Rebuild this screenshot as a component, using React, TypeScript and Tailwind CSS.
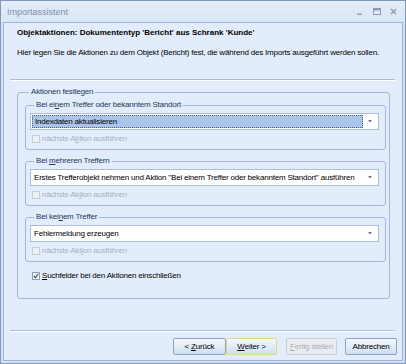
import React from "react";

const font = { fontFamily: '"Liberation Sans", Arial, sans-serif' };

function Combo({ text, selected }: { text: string; selected?: boolean }) {
  return (
    <div className="mr-[2px] flex h-[17px] items-center border border-[#abbfdc] bg-white pl-[1px] pr-[1px]">
      <div
        className={
          "flex h-[13px] flex-1 items-center whitespace-nowrap pl-[2px] " +
          (selected ? "border border-dotted border-[#4f6482] bg-[#abc4ea] text-black" : "text-black")
        }
      >
        {text}
      </div>
      <div className="flex w-[14px] items-center justify-center">
        <svg width="4" height="3" viewBox="0 0 4 3">
          <path d="M0 0h4L2 2.5z" fill="#6a7a90" />
        </svg>
      </div>
    </div>
  );
}

function Check({ children, checked, disabled }: { children: React.ReactNode; checked?: boolean; disabled?: boolean }) {
  return (
    <div className={"flex h-[10px] items-center gap-[2px] whitespace-nowrap " + (disabled ? "text-[#a8b2c0]" : "text-black")}>
      <div
        className={
          "flex h-[8px] w-[8px] items-center justify-center border " +
          (disabled ? "border-[#c3ccd8] bg-[#eef2f7]" : "border-[#8fa3c0] bg-[#f4f7fb]")
        }
      >
        {checked && (
          <svg width="6" height="6" viewBox="0 0 6 6">
            <path d="M0.8 3 L2.4 4.6 L5.2 1" stroke="#3b4e6a" strokeWidth="1.2" fill="none" />
          </svg>
        )}
      </div>
      <span>{children}</span>
    </div>
  );
}

function Group({ title, children, className }: { title: React.ReactNode; children: React.ReactNode; className?: string }) {
  return (
    <fieldset className={"rounded-[3px] border border-[#a3b8d9] " + (className || "")}>
      <legend className="ml-[4px] h-[10px] whitespace-nowrap px-[2px] leading-[10px] text-[#1e395b]">{title}</legend>
      {children}
    </fieldset>
  );
}

function Btn({ children, variant }: { children: React.ReactNode; variant?: "default" | "disabled" }) {
  const base = "flex h-[17px] items-center justify-center rounded-[2px] border whitespace-pre ";
  const cls =
    variant === "default"
      ? "border-[#e6d68c] bg-gradient-to-b from-[#f4f8fd] to-[#cfdff3] text-black"
      : variant === "disabled"
      ? "border-[#c9ced6] bg-[#e9edf2] text-[#a9b0ba]"
      : "border-[#8ba2c4] bg-gradient-to-b from-[#f4f8fd] to-[#cfdff3] text-black";
  return <div className={base + cls}>{children}</div>;
}

export default function App() {
  return (
    <div className="h-[364px] w-[406px] text-[8px] leading-[10px] tracking-[-0.2px]" style={font}>
      <div className="flex h-full w-full flex-col border border-[#7f98bb] bg-[#d3e1f3]">
        {/* title bar */}
        <div className="flex h-[21px] items-center bg-gradient-to-b from-[#e4edf9] to-[#d9e6f6] pl-[6px] pr-[8px]">
          <span className="text-[9px] tracking-normal text-[#7d90aa]">Importassistent</span>
          <div className="ml-auto flex items-center">
            <svg width="8" height="8" viewBox="0 0 8 8">
              <rect x="1" y="5.5" width="5" height="1.5" fill="#97a6ba" />
            </svg>
            <svg className="ml-[9px]" width="8" height="8" viewBox="0 0 8 8">
              <rect x="0.5" y="0.5" width="7" height="6" fill="none" stroke="#8d9db2" />
              <rect x="0.5" y="0.5" width="7" height="2" fill="#8d9db2" />
            </svg>
            <svg className="ml-[9px]" width="7" height="7" viewBox="0 0 7 7">
              <path d="M1 1 L6 6 M6 1 L1 6" stroke="#8d9db2" strokeWidth="1.5" />
            </svg>
          </div>
        </div>
        {/* client */}
        <div className="mx-[2px] mb-[2px] flex flex-1 flex-col border border-[#9fb5d6] bg-[#e2ecfa]">
          <div className="px-[13px] pt-[5px]">
            <div className="whitespace-nowrap font-bold tracking-normal text-black">
              Objektaktionen: Dokumententyp 'Bericht' aus Schrank 'Kunde'
            </div>
            <div className="mt-[10px] whitespace-nowrap text-black">
              Hier legen Sie die Aktionen zu dem Objekt (Bericht) fest, die während des Imports ausgeführt werden sollen.
            </div>
          </div>
          <div className="ml-[6px] mr-[7px] mt-[21px] h-[2px] border-t border-b border-t-[#a9bcd8] border-b-white" />
          <div className="ml-[13px] mr-[12px] mt-[6px]">
            <Group title="Aktionen festlegen" className="h-[212px] pl-[7px] pr-[3px]">
              <div className="mt-[3px] flex flex-col gap-[6px]">
                <Group title={<>Bei ei<u>n</u>em Treffer oder bekanntem Standort</>} className="h-[50px] pl-[4px] pr-[4px]">
                  <div className="mt-[3px]">
                    <Combo text="Indexdaten aktualisieren" selected />
                  </div>
                  <div className="mt-[4px] pl-[2px]">
                    <Check disabled>
                      nächste A<u>k</u>tion ausführen
                    </Check>
                  </div>
                </Group>
                <Group title={<>Bei <u>m</u>ehreren Treffern</>} className="h-[50px] pl-[4px] pr-[4px]">
                  <div className="mt-[3px]">
                    <Combo text={'Erstes Trefferobjekt nehmen und Aktion "Bei einem Treffer oder bekanntem Standort" ausführen'} />
                  </div>
                  <div className="mt-[4px] pl-[2px]">
                    <Check disabled>
                      nächste Ak<u>t</u>ion ausführen
                    </Check>
                  </div>
                </Group>
                <Group title={<>Bei kei<u>n</u>em Treffer</>} className="h-[50px] pl-[4px] pr-[4px]">
                  <div className="mt-[3px]">
                    <Combo text="Fehlermeldung erzeugen" />
                  </div>
                  <div className="mt-[4px] pl-[2px]">
                    <Check disabled>
                      nächste Akt<u>i</u>on ausführen
                    </Check>
                  </div>
                </Group>
                <div className="mt-[3px] pl-[7px]">
                  <Check checked>
                    <u>S</u>uchfelder bei den Aktionen einschließen
                  </Check>
                </div>
              </div>
            </Group>
          </div>
          <div className="ml-[6px] mr-[7px] mt-[31px] h-[2px] border-t border-b border-t-[#a9bcd8] border-b-white" />
          <div className="mt-[6px] flex justify-end pr-[5px]">
            <div className="w-[53px]">
              <Btn>
                <span>{"< "}</span>
                <u>Z</u>
                <span>urück</span>
              </Btn>
            </div>
            <div className="w-[51px]">
              <Btn variant="default">
                <u>W</u>
                <span>{"eiter >"}</span>
              </Btn>
            </div>
            <div className="ml-[9px] w-[51px]">
              <Btn variant="disabled">
                <u>F</u>
                <span>ertig stellen</span>
              </Btn>
            </div>
            <div className="ml-[8px] w-[52px]">
              <Btn>Abbrechen</Btn>
            </div>
          </div>
        </div>
      </div>
    </div>
  );
}
